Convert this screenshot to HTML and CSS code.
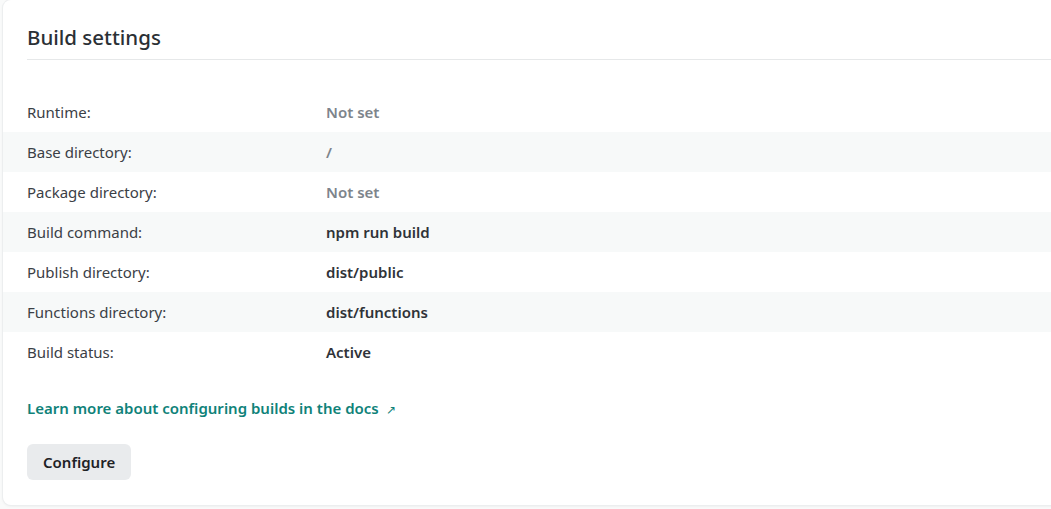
FILE: index.html
```html
<!DOCTYPE html>
<html>
<head>
<meta charset="utf-8">
<link rel="stylesheet" href="styles.css">
</head>
<body>
<section class="card">
  <header class="card-head">
    <h2 class="title">Build settings</h2>
  </header>
  <dl class="settings">
    <div class="row"><dt>Runtime:</dt><dd class="muted">Not set</dd></div>
    <div class="row alt"><dt>Base directory:</dt><dd class="muted">/</dd></div>
    <div class="row"><dt>Package directory:</dt><dd class="muted">Not set</dd></div>
    <div class="row alt"><dt>Build command:</dt><dd>npm run build</dd></div>
    <div class="row"><dt>Publish directory:</dt><dd>dist/public</dd></div>
    <div class="row alt"><dt>Functions directory:</dt><dd>dist/functions</dd></div>
    <div class="row"><dt>Build status:</dt><dd>Active</dd></div>
  </dl>
  <div class="foot">
    <a class="doc-link" href="#">Learn more about configuring builds in the docs <span class="arrow">↗</span></a>
    <button class="btn">Configure</button>
  </div>
</section>
</body>
</html>
```
FILE: styles.css
```css
html, body {
  margin: 0;
  padding: 0;
  background: #f9fafa;
  overflow: hidden;
  width: 1051px;
  height: 509px;
}
body {
  font-family: "Noto Sans", "Open Sans", sans-serif;
  color: #2f3338;
}
.card {
  box-sizing: border-box;
  width: 1070px;
  height: 505px;
  margin: 0 0 0 3px;
  background: #fff;
  border-radius: 8px;
  box-shadow: 0 0 0 1px #eceeef, 0 1px 3px rgba(0,0,0,0.08);
  padding-top: 20px;
}
.card-head {
  margin: 0 0 0 24px;
  border-bottom: 1px solid #e6e8e9;
  height: 39px;
}
.title {
  margin: 0;
  font-size: 20.5px;
  font-weight: 500;
  line-height: 35px;
  color: #2b3035;
}
.settings {
  margin: 32px 0 0;
  padding: 0;
}
.row {
  display: flex;
  align-items: center;
  height: 40px;
  padding-left: 24px;
  font-size: 15px;
}
.row.alt { background: #f7f9f9; }
dt {
  width: 299px;
  flex: none;
  color: #3b4046;
}
dd {
  margin: 0;
  font-weight: 600;
  color: #2f3338;
}
dd.muted { color: #7d848b; }
.foot {
  padding: 24px 0 0 24px;
  display: flex;
  flex-direction: column;
  align-items: flex-start;
  gap: 22px;
}
.doc-link {
  color: #0f8279;
  font-weight: 600;
  font-size: 15px;
  text-decoration: none;
  line-height: 24px;
}
.arrow { font-size: 12px; font-weight: 400; margin-left: 3px; }
.btn {
  font-family: inherit;
  border: 0;
  background: #e9ebed;
  border-radius: 6px;
  height: 36px;
  padding: 0 16px;
  font-size: 15px;
  font-weight: 600;
  color: #1e2226;
}
```
